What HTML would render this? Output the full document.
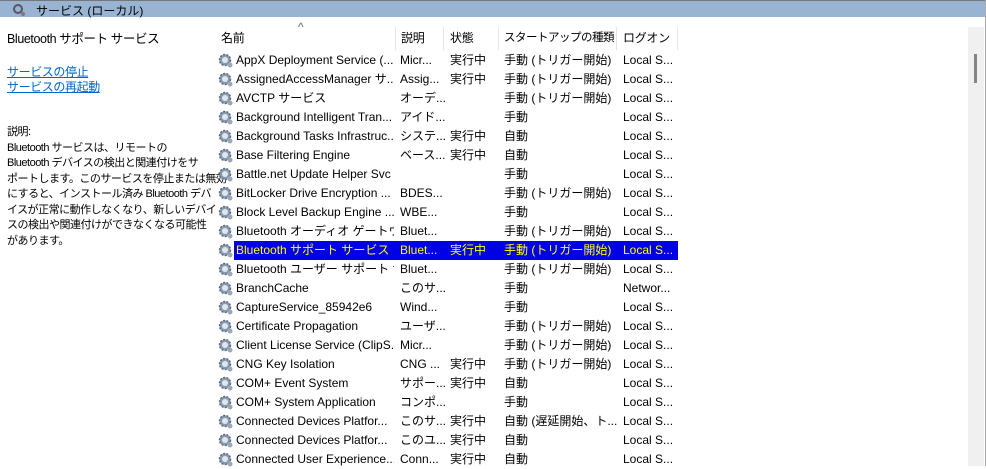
<!DOCTYPE html>
<html><head><meta charset="utf-8"><style>
body{margin:0;width:986px;height:466px;overflow:hidden;background:#fff;font-family:"Liberation Sans","Noto Sans CJK JP",sans-serif;font-size:12px;color:#000;position:relative}
.top{position:absolute;left:0;top:0;width:986px;height:17px;background:#98b4d2;border-top:1px solid #777;box-sizing:border-box}
.top span{position:absolute;left:36px;top:1px;font-size:12px;color:#000}
.rp{position:absolute;left:205px;top:17px;width:781px;height:449px;background:#fff;border-top-left-radius:6px}
.t{position:absolute;white-space:nowrap;line-height:15px;letter-spacing:-0.4px}
a{color:#0066cc;text-decoration:underline}
.sb{position:absolute;left:968px;top:27px;width:16px;height:439px;background:#f0f0f0}
.th{position:absolute;left:974px;top:54px;width:3px;height:29px;background:#858585}
.rb{position:absolute;left:985px;top:0;width:1px;height:466px;background:#aaa}
.hd{position:absolute;top:31px;line-height:14px;white-space:nowrap;letter-spacing:-0.3px}
.sep{position:absolute;top:27px;width:1px;height:23px;background:#e5e5e5}
.row{position:absolute;left:216px;height:19px;width:462px;line-height:19px;white-space:nowrap}
.row span{position:absolute;top:0;overflow:hidden}
.row svg{position:absolute;left:2px;top:2px}
.sel .bg{position:absolute;left:18px;top:0;width:444px;height:19px;background:#0000e6}
.sel span{color:#ffff00}
</style></head><body>
<div class="top"><svg style="position:absolute;left:12px;top:2px" width="14" height="14" viewBox="0 0 14 14"><circle cx="6" cy="6" r="4" fill="none" stroke="#556" stroke-width="2"/><circle cx="11" cy="11" r="2" fill="#778"/></svg><span>サービス (ローカル)</span></div>
<div class="rp"></div>
<div class="t" style="left:7px;top:32px;font-size:12.5px">Bluetooth サポート サービス</div>
<div class="t" style="left:7px;top:65px"><a>サービスの停止</a></div>
<div class="t" style="left:7px;top:80px"><a>サービスの再起動</a></div>
<div class="t" style="left:7px;top:125px;line-height:15.5px;font-size:11px;letter-spacing:-0.5px">説明:<br>Bluetooth サービスは、リモートの<br>Bluetooth デバイスの検出と関連付けをサ<br>ポートします。このサービスを停止または無効<br>にすると、インストール済み Bluetooth デバ<br>イスが正常に動作しなくなり、新しいデバイ<br>スの検出や関連付けができなくなる可能性<br>があります。</div>
<div class="hd" style="left:298px;top:20px;color:#666">^</div>
<div class="hd" style="left:221px">名前</div>
<div class="hd" style="left:401px">説明</div>
<div class="hd" style="left:450px">状態</div>
<div class="hd" style="left:504px;font-size:11.5px;letter-spacing:-0.5px">スタートアップの種類</div>
<div class="hd" style="left:623px">ログオン</div>
<div class="sep" style="left:395px"></div><div class="sep" style="left:443px"></div><div class="sep" style="left:498px"></div><div class="sep" style="left:616px"></div><div class="sep" style="left:677px"></div>
<svg width="0" height="0" style="position:absolute"><defs><g id="g"><circle cx="7" cy="7" r="5.5" fill="#8a9bb0" stroke="#5a6a80" stroke-width="1.5" stroke-dasharray="2 1.4"/><circle cx="7" cy="7" r="3" fill="#dfe6ee"/><circle cx="12" cy="12" r="2.5" fill="#9aa8b8"/></g></defs></svg>
<div id="rows"></div>
<div class="sb"></div><div class="th"></div><div class="rb"></div>
<script>
var d=[
["AppX Deployment Service (...","Micr...","実行中","手動 (トリガー開始)","Local S..."],
["AssignedAccessManager サ...","Assig...","実行中","手動 (トリガー開始)","Local S..."],
["AVCTP サービス","オーデ...","","手動 (トリガー開始)","Local S..."],
["Background Intelligent Tran...","アイド...","","手動","Local S..."],
["Background Tasks Infrastruc...","システ...","実行中","自動","Local S..."],
["Base Filtering Engine","ベース...","実行中","自動","Local S..."],
["Battle.net Update Helper Svc","","","手動","Local S..."],
["BitLocker Drive Encryption ...","BDES...","","手動 (トリガー開始)","Local S..."],
["Block Level Backup Engine ...","WBE...","","手動","Local S..."],
["Bluetooth オーディオ ゲートウエ...","Bluet...","","手動 (トリガー開始)","Local S..."],
["Bluetooth サポート サービス","Bluet...","実行中","手動 (トリガー開始)","Local S..."],
["Bluetooth ユーザー サポート サ...","Bluet...","","手動 (トリガー開始)","Local S..."],
["BranchCache","このサ...","","手動","Networ..."],
["CaptureService_85942e6","Wind...","","手動","Local S..."],
["Certificate Propagation","ユーザ...","","手動 (トリガー開始)","Local S..."],
["Client License Service (ClipS...","Micr...","","手動 (トリガー開始)","Local S..."],
["CNG Key Isolation","CNG ...","実行中","手動 (トリガー開始)","Local S..."],
["COM+ Event System","サポー...","実行中","自動","Local S..."],
["COM+ System Application","コンポ...","","手動","Local S..."],
["Connected Devices Platfor...","このサ...","実行中","自動 (遅延開始、ト...","Local S..."],
["Connected Devices Platfor...","このユ...","実行中","自動","Local S..."],
["Connected User Experience...","Conn...","実行中","自動","Local S..."]];
var h="";
d.forEach(function(r,i){var y=51+i*19;
h+='<div class="row'+(i==10?' sel':'')+'" style="top:'+y+'px">'+(i==10?'<div class="bg"></div>':'')+
'<svg width="16" height="16"><use href="#g"/></svg>'+
'<span style="left:20px;width:158px">'+r[0]+'</span><span style="left:184px">'+r[1]+'</span><span style="left:234px">'+r[2]+'</span><span style="left:288px">'+r[3]+'</span><span style="left:407px">'+r[4]+'</span></div>';});
document.getElementById("rows").innerHTML=h;
</script>
</body></html>
